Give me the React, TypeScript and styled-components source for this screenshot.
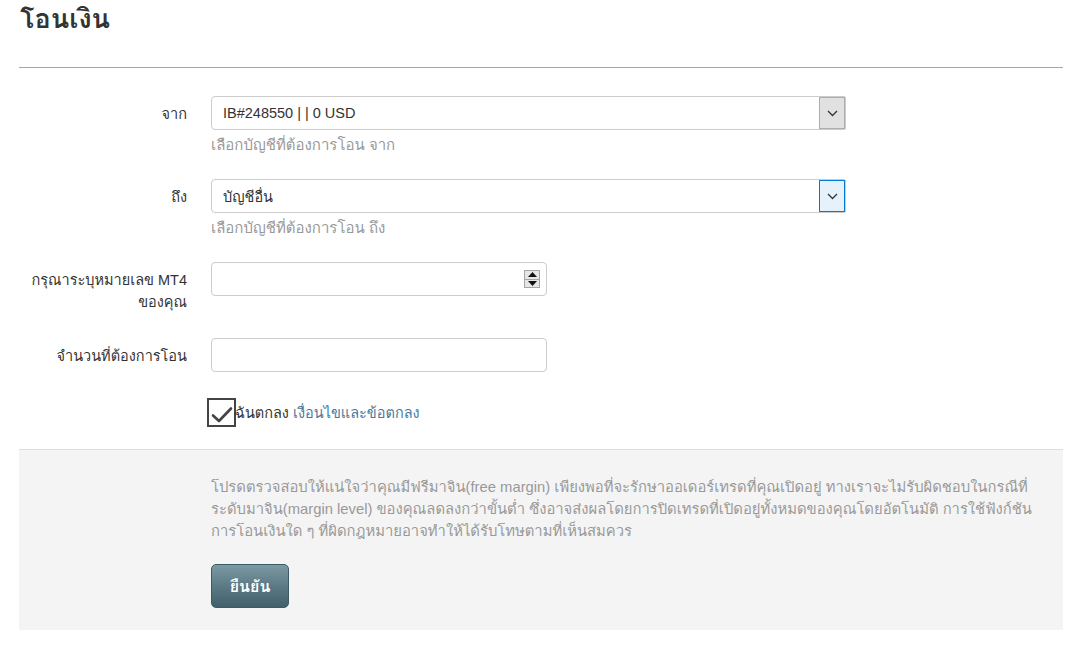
import React, { useState } from 'react';
import styled, { createGlobalStyle } from 'styled-components';

const GlobalStyle = createGlobalStyle`
  html, body {
    margin: 0;
    padding: 0;
    background: #ffffff;
  }
  body {
    font-family: "Liberation Sans", Loma, Garuda, "Noto Sans Thai Looped", "Noto Sans Thai", "Noto Sans", Arial, sans-serif;
    font-size: 14px;
    color: #333333;
  }
  * {
    box-sizing: border-box;
  }
`;

interface RowProps {
  label: React.ReactNode;
  children: React.ReactNode;
}

function FormRow({ label, children }: RowProps) {
  return (
    <S.Row>
      <S.Label>{label}</S.Label>
      <S.Field>{children}</S.Field>
    </S.Row>
  );
}

function Chevron() {
  return (
    <svg width="11" height="7" viewBox="0 0 11 7">
      <path d="M1 1 L5.5 5.5 L10 1" fill="none" stroke="#333" strokeWidth="1.3" />
    </svg>
  );
}

function Spinner() {
  return (
    <S.Spinner>
      <S.SpinHalf>
        <svg width="9" height="5" viewBox="0 0 9 5">
          <path d="M0 5 L4.5 0 L9 5 Z" fill="#111" />
        </svg>
      </S.SpinHalf>
      <S.SpinHalf>
        <svg width="9" height="5" viewBox="0 0 9 5">
          <path d="M0 0 L4.5 5 L9 0 Z" fill="#111" />
        </svg>
      </S.SpinHalf>
    </S.Spinner>
  );
}

function TransferPage() {
  const [agree, setAgree] = useState(true);
  const [mt4, setMt4] = useState('');
  const [amount, setAmount] = useState('');

  return (
    <S.Page>
      <GlobalStyle />
      <S.Title>โอนเงิน</S.Title>
      <S.Divider />

      <S.Form>
        <FormRow label="จาก">
          <S.Select>
            <S.SelectText>IB#248550 | | 0 USD</S.SelectText>
            <S.Arrow>
              <Chevron />
            </S.Arrow>
          </S.Select>
          <S.Help>เลือกบัญชีที่ต้องการโอน จาก</S.Help>
        </FormRow>

        <FormRow label="ถึง">
          <S.Select>
            <S.SelectText>บัญชีอื่น</S.SelectText>
            <S.Arrow $active>
              <Chevron />
            </S.Arrow>
          </S.Select>
          <S.Help>เลือกบัญชีที่ต้องการโอน ถึง</S.Help>
        </FormRow>

        <FormRow
          label={
            <>
              กรุณาระบุหมายเลข MT4
              <br />
              ของคุณ
            </>
          }
        >
          <S.InputWrap>
            <S.Input value={mt4} onChange={(e) => setMt4(e.target.value)} />
            <Spinner />
          </S.InputWrap>
        </FormRow>

        <FormRow label="จำนวนที่ต้องการโอน">
          <S.InputWrap>
            <S.Input value={amount} onChange={(e) => setAmount(e.target.value)} />
          </S.InputWrap>
        </FormRow>

        <S.AgreeRow>
          <S.Check onClick={() => setAgree(!agree)}>
            {agree && (
              <svg width="22" height="18" viewBox="0 0 22 18">
                <path
                  d="M2 9.5 L8 15 L20 2.5"
                  fill="none"
                  stroke="#444"
                  strokeWidth="2.6"
                  strokeLinecap="round"
                  strokeLinejoin="round"
                />
              </svg>
            )}
          </S.Check>
          <S.AgreeText>
            ฉันตกลง <S.Link href="#">เงื่อนไขและข้อตกลง</S.Link>
          </S.AgreeText>
        </S.AgreeRow>
      </S.Form>

      <S.Footer>
        <S.Notice>
          โปรดตรวจสอบให้แน่ใจว่าคุณมีฟรีมาจิน(free margin) เพียงพอที่จะรักษาออเดอร์เทรดที่คุณเปิดอยู่ ทางเราจะไม่รับผิดชอบในกรณีที่
          <br />
          ระดับมาจิน(margin level) ของคุณลดลงกว่าขั้นต่ำ ซึ่งอาจส่งผลโดยการปิดเทรดที่เปิดอยู่ทั้งหมดของคุณโดยอัตโนมัติ การใช้ฟังก์ชัน
          <br />
          การโอนเงินใด ๆ ที่ผิดกฎหมายอาจทำให้ได้รับโทษตามที่เห็นสมควร
        </S.Notice>
        <S.Button type="button">ยืนยัน</S.Button>
      </S.Footer>
    </S.Page>
  );
}

const S = {
  Page: styled.div`
    width: 1044px;
    margin: 0 0 0 19px;
    padding-bottom: 17px;
  `,
  Title: styled.h1`
    margin: 0;
    padding: 1px 0 0 1px;
    font-size: 27px;
    line-height: 37px;
    font-weight: 700;
    color: #333333;
  `,
  Divider: styled.hr`
    margin: 29px 0 28px;
    border: 0;
    border-top: 1px solid #b5a681;
    height: 0;
  `,
  Form: styled.div`
    display: flex;
    flex-direction: column;
  `,
  Row: styled.div`
    display: grid;
    grid-template-columns: 168px 1fr;
    column-gap: 24px;
    margin-bottom: 24px;
  `,
  Label: styled.div`
    text-align: right;
    padding-top: 7px;
    padding-bottom: 1px;
    line-height: 22px;
    font-size: 14.5px;
    color: #333333;
  `,
  Field: styled.div`
    display: flex;
    flex-direction: column;
  `,
  Select: styled.div`
    display: flex;
    align-items: stretch;
    width: 635px;
    height: 34px;
    border: 1px solid #cccccc;
    border-radius: 4px 2px 2px 4px;
    background: #ffffff;
  `,
  SelectText: styled.div`
    flex: 1;
    display: flex;
    align-items: center;
    padding-left: 11px;
    font-size: 14.5px;
    color: #333333;
  `,
  Arrow: styled.div<{ $active?: boolean }>`
    width: 26px;
    display: flex;
    align-items: center;
    justify-content: center;
    background: ${(p) => (p.$active ? '#e5f1fb' : '#e1e1e1')};
    border: 1px solid ${(p) => (p.$active ? '#0078d7' : '#adadad')};
  `,
  Help: styled.div`
    margin-top: 5px;
    line-height: 20px;
    color: #999999;
    font-size: 15px;
  `,
  InputWrap: styled.div`
    display: flex;
    align-items: center;
    width: 336px;
    height: 34px;
    border: 1px solid #cccccc;
    border-radius: 4px;
    background: #ffffff;
    padding-right: 6px;
  `,
  Input: styled.input`
    flex: 1;
    min-width: 0;
    height: 100%;
    border: 0;
    outline: none;
    background: transparent;
    padding: 0 11px;
    font-family: inherit;
    font-size: 14px;
    color: #333333;
  `,
  Spinner: styled.div`
    display: flex;
    flex-direction: column;
    width: 16px;
    height: 18px;
    border: 1px solid #a6a6a6;
    background: #e6e6e6;
  `,
  SpinHalf: styled.div`
    flex: 1;
    display: flex;
    align-items: center;
    justify-content: center;
    &:first-child {
      border-bottom: 1px solid #a6a6a6;
    }
  `,
  AgreeRow: styled.div`
    display: flex;
    align-items: center;
    padding-left: 188px;
    margin-top: 2px;
    margin-bottom: 22px;
  `,
  Check: styled.div`
    width: 29px;
    height: 29px;
    border: 2px solid #444444;
    background: #ffffff;
    display: flex;
    align-items: center;
    justify-content: center;
    padding-top: 4px;
    cursor: pointer;
  `,
  AgreeText: styled.div`
    margin-left: -1px;
    font-size: 14.5px;
    color: #333333;
  `,
  Link: styled.a`
    color: #4a7a9b;
    text-decoration: none;
  `,
  Footer: styled.div`
    background: #f4f4f4;
    border-top: 1px solid #dddddd;
    padding: 26px 20px 22px 192px;
  `,
  Notice: styled.p`
    margin: 0 0 22px;
    font-size: 14.8px;
    line-height: 22px;
    color: #999999;
  `,
  Button: styled.button`
    width: 78px;
    height: 44px;
    border: 1px solid #3d5a65;
    border-radius: 5px;
    background: linear-gradient(to bottom, #7b9aa3 0%, #5c7a85 50%, #42606b 100%);
    color: #ffffff;
    font-family: inherit;
    font-size: 16px;
    font-weight: 700;
    cursor: pointer;
  `,
};

export default function App() {
  return <TransferPage />;
}
